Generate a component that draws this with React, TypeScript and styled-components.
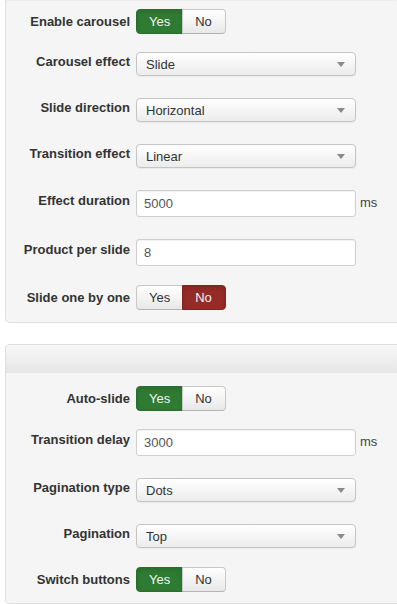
import { createGlobalStyle, styled } from "styled-components";

const GlobalStyle = createGlobalStyle`
  body {
    margin: 0;
    background: #ffffff;
    font-family: "Liberation Sans", Arial, Helvetica, sans-serif;
    font-size: 13px;
    color: #333333;
  }
`;

type Kind = "toggle" | "select" | "input";

type Field =
  | { kind: "toggle"; label: string; value: boolean; mb?: number }
  | { kind: "select"; label: string; value: string; mb?: number }
  | { kind: "input"; label: string; value: string; unit?: string; mb?: number };

const carouselFields: Field[] = [
  { kind: "toggle", label: "Enable carousel", value: true, mb: 18 },
  { kind: "select", label: "Carousel effect", value: "Slide" },
  { kind: "select", label: "Slide direction", value: "Horizontal" },
  { kind: "select", label: "Transition effect", value: "Linear" },
  { kind: "input", label: "Effect duration", value: "5000", unit: "ms" },
  { kind: "input", label: "Product per slide", value: "8", mb: 19 },
  { kind: "toggle", label: "Slide one by one", value: false, mb: 0 },
];

const autoFields: Field[] = [
  { kind: "toggle", label: "Auto-slide", value: true, mb: 18 },
  { kind: "input", label: "Transition delay", value: "3000", unit: "ms" },
  { kind: "select", label: "Pagination type", value: "Dots" },
  { kind: "select", label: "Pagination", value: "Top", mb: 19 },
  { kind: "toggle", label: "Switch buttons", value: true, mb: 0 },
];

// label offset so its baseline sits where the reference has it
const labelPad: Record<Kind, number> = { toggle: 5, select: 2, input: 3 };

const YesNo = ({ value }: { value: boolean }) => (
  <BtnGroup>
    <ToggleBtn $active={value} $tone="yes">
      Yes
    </ToggleBtn>
    <ToggleBtn $active={!value} $tone="no">
      No
    </ToggleBtn>
  </BtnGroup>
);

const FieldRow = ({ field }: { field: Field }) => (
  <Row $mb={field.mb ?? 22}>
    <Label $pt={labelPad[field.kind]}>{field.label}</Label>
    {field.kind === "toggle" && <YesNo value={field.value} />}
    {field.kind === "select" && (
      <Select>
        <span>{field.value}</span>
        <svg width="8" height="5" viewBox="0 0 8 5">
          <path d="M0 0 L8 0 L4 5 Z" fill="#8a8a8a" />
        </svg>
      </Select>
    )}
    {field.kind === "input" && (
      <>
        <TextInput>{field.value}</TextInput>
        {field.unit && <Unit>{field.unit}</Unit>}
      </>
    )}
  </Row>
);

const App = () => {
  return (
    <>
      <GlobalStyle />
      <Page>
        <Well $cut>
          {carouselFields.map((f) => (
            <FieldRow key={f.label} field={f} />
          ))}
        </Well>
        <Well>
          <WellHeader />
          <WellBody>
            {autoFields.map((f) => (
              <FieldRow key={f.label} field={f} />
            ))}
          </WellBody>
        </Well>
      </Page>
    </>
  );
};

export default App;

const Page = styled.div`
  padding-left: 5px;
  display: flex;
  flex-direction: column;
  gap: 21px;
`;

// the first well is cut by the top of the window, both by its right side
const Well = styled.div<{ $cut?: boolean }>`
  background: #f5f5f5;
  border: 1px solid #dedede;
  border-right: none;
  border-top: ${(p) => (p.$cut ? "none" : "1px solid #dedede")};
  border-radius: ${(p) => (p.$cut ? "0 0 0 5px" : "5px 0 0 5px")};
  padding: ${(p) => (p.$cut ? "9px 0 12px" : "0 0 11px")};
  box-shadow: inset 0 1px 1px rgba(0, 0, 0, 0.03);
  overflow: hidden;
`;

const WellHeader = styled.div`
  height: 27px;
  background: linear-gradient(to bottom, #f8f8f8, #e6e6e6);
  border-bottom: 1px solid #e4e4e4;
`;

const WellBody = styled.div`
  padding-top: 13px;
`;

const Row = styled.div<{ $mb: number }>`
  display: flex;
  align-items: flex-start;
  margin-bottom: ${(p) => p.$mb}px;
`;

const Label = styled.label<{ $pt: number }>`
  width: 124px;
  flex: none;
  margin-right: 6px;
  padding-top: ${(p) => p.$pt}px;
  text-align: right;
  font-weight: bold;
  font-size: 13px;
  line-height: 16px;
  color: #333333;
  white-space: nowrap;
`;

const BtnGroup = styled.div`
  display: flex;
`;

const ToggleBtn = styled.div<{ $active: boolean; $tone: "yes" | "no" }>`
  height: 25px;
  box-sizing: border-box;
  padding: 0 12px;
  display: flex;
  align-items: center;
  font-size: 13px;
  border: 1px solid;
  border-color: ${(p) =>
    p.$active
      ? p.$tone === "yes"
        ? "#2a6e2d"
        : "#852520"
      : "#c8c8c8 #c8c8c8 #b3b3b3"};
  color: ${(p) => (p.$active ? "#f4f4f4" : "#333333")};
  background: ${(p) =>
    p.$active
      ? p.$tone === "yes"
        ? "#2f7b33"
        : "#952b26"
      : "linear-gradient(to bottom, #ffffff, #e8e8e8)"};
  box-shadow: ${(p) =>
    p.$active ? "inset 0 2px 4px rgba(0,0,0,0.12)" : "inset 0 1px 0 rgba(255,255,255,0.3)"};

  &:first-child {
    border-radius: 4px 0 0 4px;
  }
  &:last-child {
    border-radius: 0 4px 4px 0;
    margin-left: -1px;
    padding-right: 13px;
  }
`;

const Select = styled.div`
  width: 220px;
  height: 24px;
  box-sizing: border-box;
  padding: 0 10px 0 9px;
  display: flex;
  align-items: center;
  justify-content: space-between;
  border: 1px solid #c4c4c4;
  border-radius: 4px;
  background: linear-gradient(to bottom, #ffffff, #ececec);
  box-shadow: 0 1px 1px rgba(0, 0, 0, 0.05);
  font-size: 13px;
  color: #333333;

  svg {
    margin-top: 1px;
  }
`;

const TextInput = styled.div`
  width: 220px;
  height: 27px;
  box-sizing: border-box;
  padding: 0 7px;
  display: flex;
  align-items: center;
  border: 1px solid #cfcfcf;
  border-radius: 3px;
  background: #ffffff;
  box-shadow: inset 0 1px 1px rgba(0, 0, 0, 0.06);
  font-size: 13px;
  color: #555555;
`;

const Unit = styled.span`
  margin-left: 4px;
  padding-top: 5px;
  font-size: 13px;
  line-height: 16px;
  color: #444444;
`;
